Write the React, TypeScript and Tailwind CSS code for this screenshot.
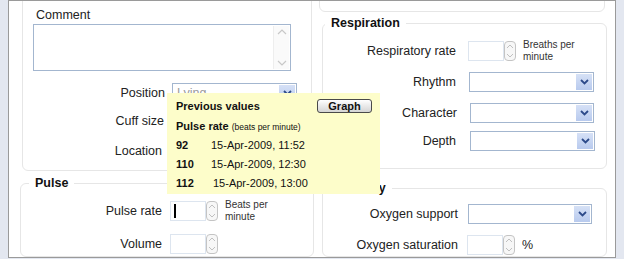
import React from "react";

const font = { fontFamily: '"Liberation Sans", Arial, sans-serif' };

// Blue dropdown box with chevron button on the right
const Select = ({ value, w = "w-[125px]" }: { value?: string; w?: string }) => (
  <div className={`${w} h-[20px] border border-[#a3b6cf] bg-white flex items-stretch`}>
    <div className="flex-1 px-[4px] text-[12.5px] leading-[18px] text-[#9a9a9a] overflow-hidden whitespace-nowrap">
      {value}
    </div>
    <div className="w-[16px] m-[1px] bg-gradient-to-b from-[#d6e1f6] to-[#b8caee] flex items-center justify-center">
      <svg width="9" height="6" viewBox="0 0 9 6">
        <path d="M1 1 L4.5 4.5 L8 1" fill="none" stroke="#2c4a8a" strokeWidth="1.8" />
      </svg>
    </div>
  </div>
);

// Number box with a small up/down spinner
const Spinner = ({ cursor = false }: { cursor?: boolean }) => (
  <div className="flex items-stretch h-[20px]">
    <div className="w-[36px] border border-[#dde5ef] bg-white relative">
      {cursor && <div className="absolute left-[3px] top-[2px] w-[1.5px] h-[14px] bg-black" />}
    </div>
    <div className="w-[12px] border border-[#c4c4c4] rounded-[4px] bg-[#f7f7f7] flex flex-col items-center justify-between py-[2px]">
      <svg width="8" height="5" viewBox="0 0 8 5">
        <path d="M1 4 L4 1 L7 4" fill="none" stroke="#c0c0c0" strokeWidth="1" />
      </svg>
      <svg width="8" height="5" viewBox="0 0 8 5">
        <path d="M1 1 L4 4 L7 1" fill="none" stroke="#c0c0c0" strokeWidth="1" />
      </svg>
    </div>
  </div>
);

const Row = ({
  label,
  labelW,
  gap,
  children,
  className = "",
}: {
  label: string;
  labelW: string;
  gap: string;
  children: React.ReactNode;
  className?: string;
}) => (
  <div className={`flex items-center ${gap} ${className}`}>
    <div className={`${labelW} text-right text-[12.5px] text-[#222]`}>{label}</div>
    {children}
  </div>
);

const Unit = ({ lines }: { lines: string[] }) => (
  <div className="text-[10px] leading-[12px] text-[#333]">
    {lines.map((l) => (
      <div key={l}>{l}</div>
    ))}
  </div>
);

const history = [
  { v: "92", d: "15-Apr-2009, 11:52", pad: "" },
  { v: "110", d: "15-Apr-2009, 12:30", pad: "" },
  { v: "112", d: "15-Apr-2009, 13:00", pad: "pl-[2px]" },
];

export default function App() {
  return (
    <div className="w-[624px] h-[259px] overflow-hidden bg-[#e3e7f0] relative" style={font}>
      <div className="mx-[8px] h-[258px] border border-[#9a9a9a] bg-white flex overflow-hidden">
        {/* Left column */}
        <div className="ml-[11px] w-[294px] flex flex-col">
          <div className="ml-[2px] w-[290px] h-[180px] -mt-[10px] border border-[#e6e6e6] rounded-[6px] pt-[15px] shrink-0">
            <div className="pl-[13px] text-[12.5px] leading-[16px] text-[#222]">Comment</div>
            <div className="ml-[10px] mt-[1px] w-[258px] h-[47px] border border-[#a3b6cf] flex justify-end p-[1px]">
              <div className="w-[16px] border-l border-[#eeeeee] bg-[#fafafa] flex flex-col justify-between items-center py-[3px]">
                <svg width="10" height="6" viewBox="0 0 10 6">
                  <path d="M1 5 L5 1 L9 5" fill="none" stroke="#c8c8c8" strokeWidth="1.2" />
                </svg>
                <svg width="10" height="6" viewBox="0 0 10 6">
                  <path d="M1 1 L5 5 L9 1" fill="none" stroke="#c8c8c8" strokeWidth="1.2" />
                </svg>
              </div>
            </div>
            <Row label="Position" labelW="w-[142px]" gap="gap-[7px]" className="mt-[12px]">
              <Select value="Lying" />
            </Row>
            <Row label="Cuff size" labelW="w-[141px]" gap="gap-[7px]" className="mt-[8px]">
              <Select />
            </Row>
            <Row label="Location" labelW="w-[139px]" gap="gap-[9px]" className="mt-[10px]">
              <Select />
            </Row>
          </div>

          <fieldset className="mt-[4px] border border-[#e6e6e6] rounded-[6px] h-[120px] pt-[8px]">
            <legend className="ml-[8px] px-[6px] text-[12.5px] leading-[16px] font-bold text-[#111]">Pulse</legend>
            <Row label="Pulse rate" labelW="w-[141px]" gap="gap-[8px]">
              <div className="flex items-center gap-[7px]">
                <Spinner cursor />
                <Unit lines={["Beats per", "minute"]} />
              </div>
            </Row>
            <Row label="Volume" labelW="w-[141px]" gap="gap-[8px]" className="mt-[11px]">
              <Spinner />
            </Row>
          </fieldset>
        </div>

        {/* Right column */}
        <div className="ml-[5px] w-[288px] flex flex-col">
          <div className="w-[286px] h-[21px] -mt-[10px] border border-[#e6e6e6] rounded-[6px] shrink-0" />

          <fieldset className="ml-[3px] mt-[3px] border border-[#e6e6e6] rounded-[6px] pt-[9px] pb-[17px]">
            <legend className="ml-[2px] px-[6px] text-[12.5px] leading-[16px] font-bold text-[#111]">Respiration</legend>
            <Row label="Respiratory rate" labelW="w-[133px]" gap="gap-[12px]">
              <div className="h-[22px] flex items-center gap-[7px]">
                <Spinner />
                <Unit lines={["Breaths per", "minute"]} />
              </div>
            </Row>
            <Row label="Rhythm" labelW="w-[133px]" gap="gap-[13px]" className="mt-[10px]">
              <Select />
            </Row>
            <Row label="Character" labelW="w-[134px]" gap="gap-[13px]" className="mt-[11px]">
              <Select w="w-[124px]" />
            </Row>
            <Row label="Depth" labelW="w-[133px]" gap="gap-[14px]" className="mt-[8px]">
              <Select />
            </Row>
          </fieldset>

          <fieldset className="ml-[3px] mt-[11px] border border-[#e6e6e6] rounded-[6px] h-[100px] pt-[8px]">
            <legend className="ml-[8px] px-[6px] text-[12.5px] leading-[16px] font-bold text-[#111]">Delivery</legend>
            <Row label="Oxygen support" labelW="w-[135px]" gap="gap-[10px]">
              <Select w="w-[124px]" />
            </Row>
            <Row label="Oxygen saturation" labelW="w-[135px]" gap="gap-[9px]" className="mt-[11px]">
              <div className="flex items-center gap-[7px]">
                <Spinner />
                <div className="text-[12.5px] text-[#222]">%</div>
              </div>
            </Row>
          </fieldset>
        </div>
      </div>

      {/* Previous values tooltip */}
      <div className="absolute left-[167px] top-[93px] w-[213px] h-[101px] bg-[#fdfdca] pl-[9px] pr-[8px] pt-[6px] text-[#111]">
        <div className="flex items-center justify-between">
          <div className="text-[11px] font-bold leading-[14px]">Previous values</div>
          <button className="w-[55px] h-[14px] border border-[#4a4a4a] rounded-[3px] bg-gradient-to-b from-[#ffffff] to-[#d4d4d4] text-[11px] font-bold leading-[12px] text-[#111]">
            Graph
          </button>
        </div>
        <div className="mt-[6px] text-[11px] font-bold leading-[14px]">
          Pulse rate <span className="text-[8.5px] font-normal">(beats per minute)</span>
        </div>
        {history.map((h, i) => (
          <div key={h.v} className={`flex text-[11px] leading-[14px] ${i === 0 ? "mt-[4px]" : "mt-[5px]"}`}>
            <div className="w-[35px] font-bold">{h.v}</div>
            <div className={h.pad}>{h.d}</div>
          </div>
        ))}
      </div>
    </div>
  );
}
